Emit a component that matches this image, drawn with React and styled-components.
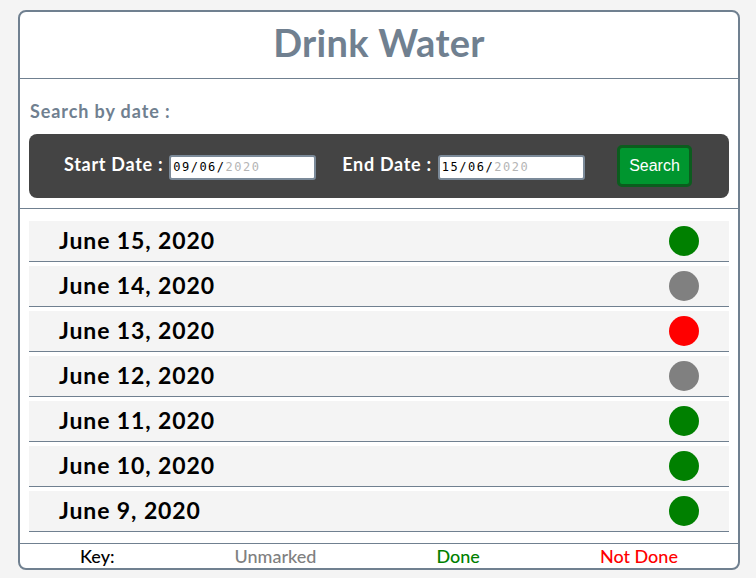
import React from 'react';
import styled, { createGlobalStyle } from 'styled-components';

const GlobalStyle = createGlobalStyle`
  body {
    margin: 0;
    background: #f4f4f4;
    font-family: Lato, "Noto Sans", sans-serif;
  }
`;

const days = [
  { date: 'June 15, 2020', status: 'done' },
  { date: 'June 14, 2020', status: 'unmarked' },
  { date: 'June 13, 2020', status: 'notdone' },
  { date: 'June 12, 2020', status: 'unmarked' },
  { date: 'June 11, 2020', status: 'done' },
  { date: 'June 10, 2020', status: 'done' },
  { date: 'June 9, 2020', status: 'done' },
];

const statusColors = {
  done: '#008000',
  unmarked: '#808080',
  notdone: '#ff0000',
};

function App() {
  return (
    <>
      <GlobalStyle />
      <Card>
        <Header>
          <Title>Drink Water</Title>
        </Header>
        <SearchSection>
          <SearchLabel>Search by date :</SearchLabel>
          <SearchBar>
            <Field>
              <FieldLabel>Start Date :</FieldLabel>
              <DateBox>
                09/06/<Year>2020</Year>
              </DateBox>
            </Field>
            <Field>
              <FieldLabel>End Date :</FieldLabel>
              <DateBox>
                15/06/<Year>2020</Year>
              </DateBox>
            </Field>
            <SearchButton>Search</SearchButton>
          </SearchBar>
        </SearchSection>
        <List>
          {days.map((day) => (
            <Row key={day.date}>
              <DateText>{day.date}</DateText>
              <Dot color={statusColors[day.status]} />
            </Row>
          ))}
        </List>
        <Footer>
          <KeyItem color="#000">Key:</KeyItem>
          <KeyItem color="#808080">Unmarked</KeyItem>
          <KeyItem color="#008000">Done</KeyItem>
          <KeyItem color="#ff0000">Not Done</KeyItem>
        </Footer>
      </Card>
    </>
  );
}

const Card = styled.div`
  margin: 10px 16px 8px 18px;
  height: 556px;
  background: #fff;
  border: 2px solid #708090;
  border-radius: 8px;
  display: flex;
  flex-direction: column;
  overflow: hidden;
`;

const Header = styled.div`
  height: 67px;
  box-sizing: border-box;
  padding-bottom: 6px;
  display: flex;
  align-items: center;
  justify-content: center;
  border-bottom: 1px solid #708090;
`;

const Title = styled.h1`
  margin: 0;
  color: #708090;
  font-size: 38px;
  font-weight: 700;
  letter-spacing: 0.3px;
`;

const SearchSection = styled.div`
  padding: 21px 9px 10px 9px;
  border-bottom: 1px solid #708090;
`;

const SearchLabel = styled.div`
  color: #708090;
  font-size: 18px;
  font-weight: 700;
  letter-spacing: 0.9px;
  margin-left: 1px;
  height: 22px;
  margin-bottom: 12px;
`;

const SearchBar = styled.div`
  height: 64px;
  background: #444;
  border-radius: 8px;
  display: flex;
  align-items: center;
  gap: 26px;
  padding: 0 37px 0 35px;
`;

const Field = styled.div`
  display: flex;
  align-items: center;
  flex-shrink: 0;
  gap: 6px;
  margin-top: -4px;
`;

const FieldLabel = styled.span`
  color: #fff;
  font-size: 18px;
  font-weight: 700;
  letter-spacing: 0.7px;
  white-space: nowrap;
`;

const DateBox = styled.div`
  width: 141px;
  height: 21px;
  margin-top: 6px;
  flex-shrink: 0;
  background: #fff;
  border: 2px solid #7b8a99;
  border-radius: 3px;
  box-sizing: content-box;
  padding: 0 0 0 2px;
  font-family: "DejaVu Sans Mono", monospace;
  font-size: 12px;
  letter-spacing: 1.5px;
  line-height: 21px;
  color: #000;
  white-space: nowrap;
`;

const Year = styled.span`
  color: #b5b5b5;
`;

const SearchButton = styled.button`
  width: 75px;
  height: 42px;
  flex-shrink: 0;
  margin: 0 0 0 auto;
  background: #00962f;
  border: 3px solid #0b5d1e;
  border-radius: 5px;
  color: #fff;
  font-family: "Liberation Sans", Arial, sans-serif;
  font-size: 16px;
  font-weight: 400;
`;

const List = styled.div`
  flex: 1;
  padding: 12px 9px 0 9px;
`;

const Row = styled.div`
  height: 40px;
  background: #f4f4f4;
  border-bottom: 1px solid #708090;
  margin-bottom: 4px;
  display: flex;
  align-items: center;
  justify-content: space-between;
  padding: 0 30px;
`;

const DateText = styled.span`
  font-size: 23px;
  font-weight: 700;
  letter-spacing: 0.9px;
  color: #000;
  margin-top: -2px;
`;

const Dot = styled.span`
  width: 30px;
  height: 30px;
  border-radius: 50%;
  background: ${(props) => props.color};
`;

const Footer = styled.div`
  height: 24px;
  border-top: 1px solid #708090;
  display: flex;
  align-items: center;
  justify-content: space-around;
`;

const KeyItem = styled.span`
  color: ${(props) => props.color};
  font-size: 18px;
  font-weight: 500;
`;

export default App;
